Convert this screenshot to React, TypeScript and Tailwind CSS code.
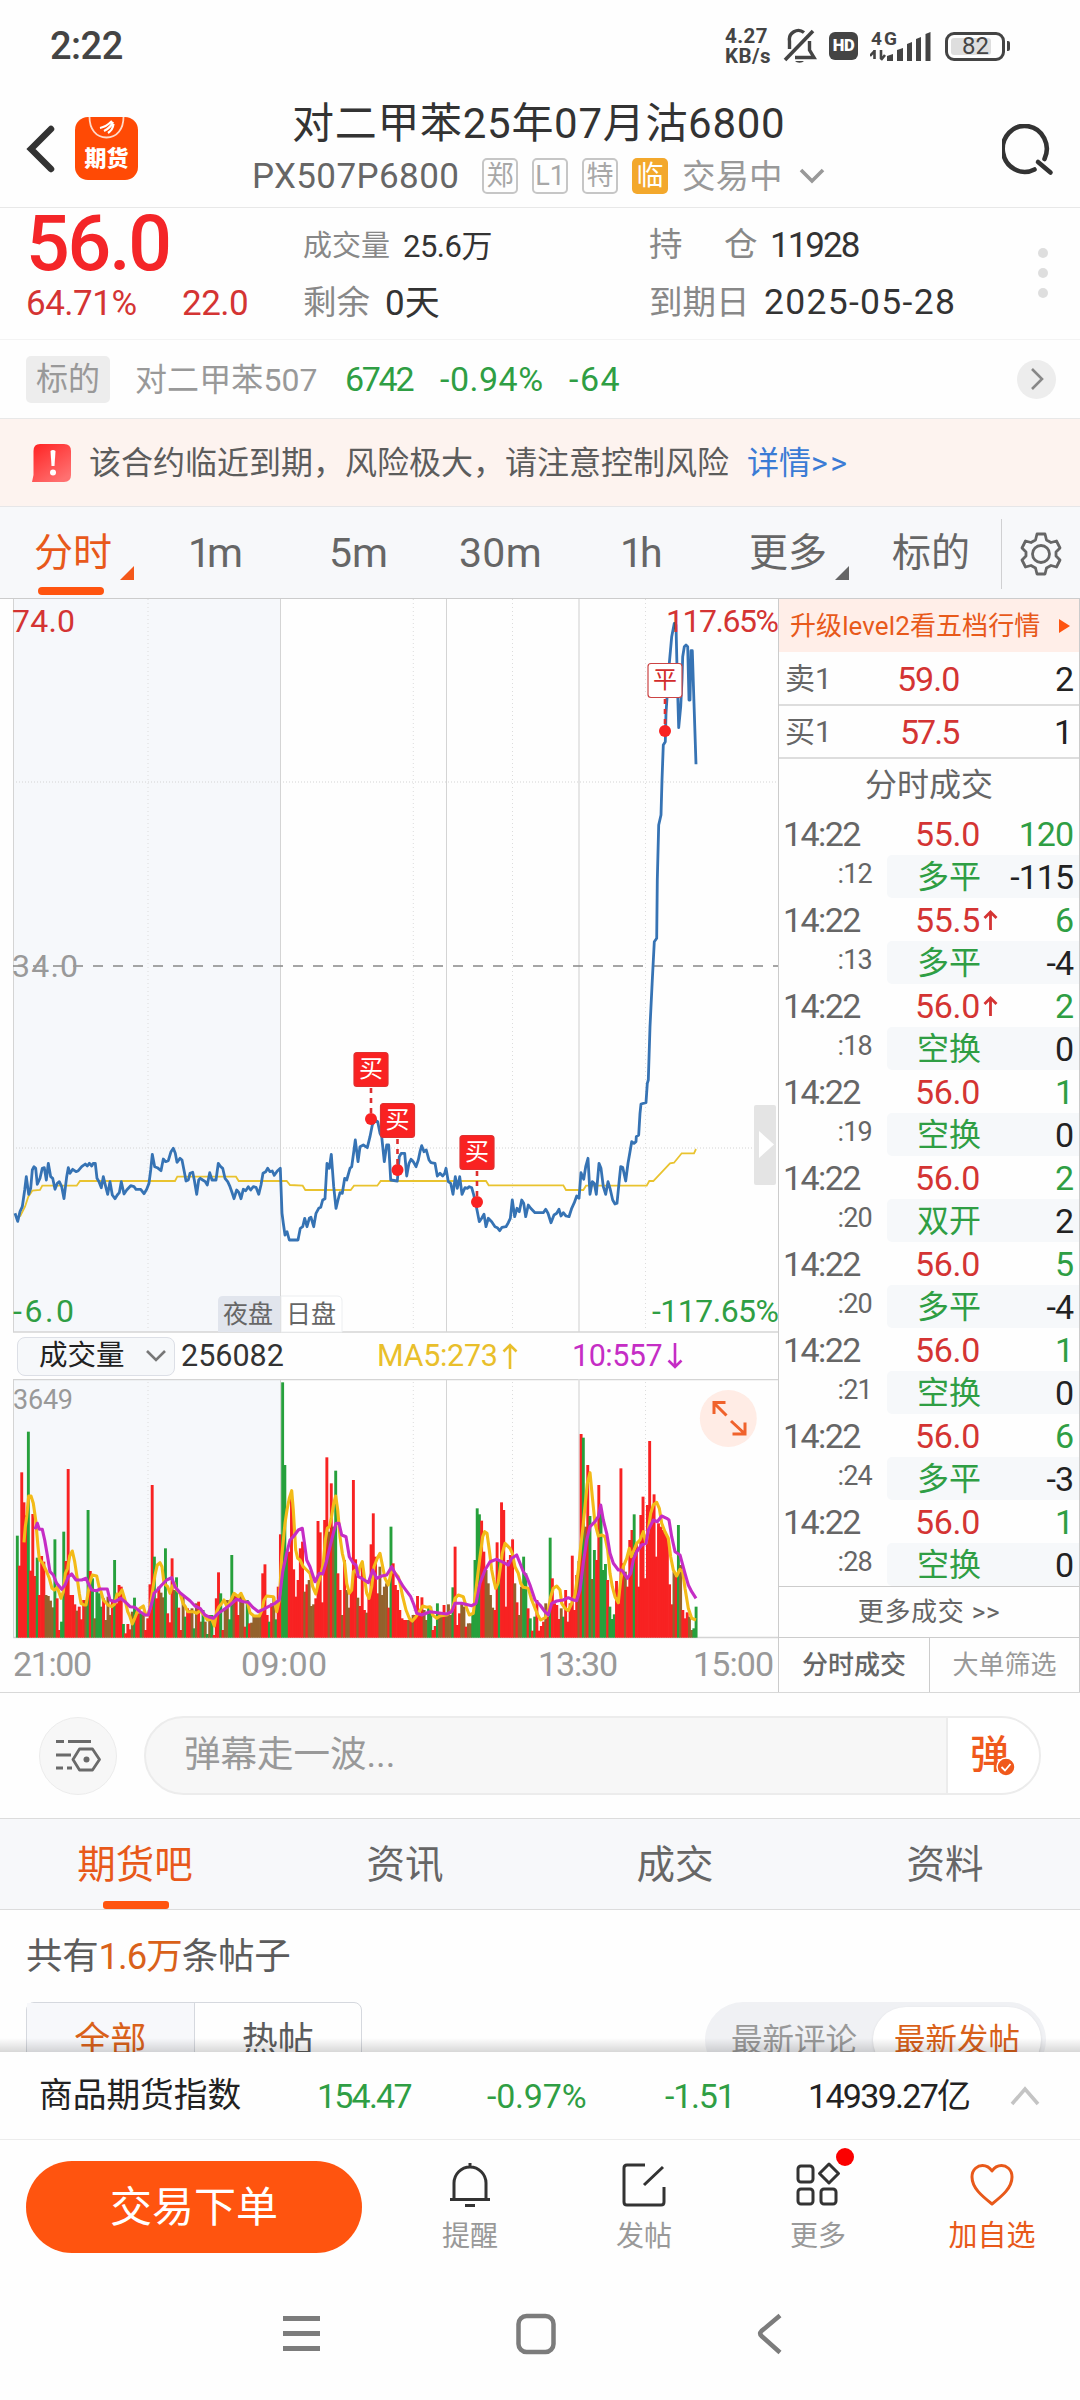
import React from 'react';

type Point = [number, number];

interface Trade {
  sec: string;
  price: string;
  up?: boolean;
  vol: string;
  kind: string;
  delta: string;
}

const TRADES: Trade[] = [
  { sec: ':12', price: '55.0', vol: '120', kind: '多平', delta: '-115' },
  { sec: ':13', price: '55.5', up: true, vol: '6', kind: '多平', delta: '-4' },
  { sec: ':18', price: '56.0', up: true, vol: '2', kind: '空换', delta: '0' },
  { sec: ':19', price: '56.0', vol: '1', kind: '空换', delta: '0' },
  { sec: ':20', price: '56.0', vol: '2', kind: '双开', delta: '2' },
  { sec: ':20', price: '56.0', vol: '5', kind: '多平', delta: '-4' },
  { sec: ':21', price: '56.0', vol: '1', kind: '空换', delta: '0' },
  { sec: ':24', price: '56.0', vol: '6', kind: '多平', delta: '-3' },
  { sec: ':28', price: '56.0', vol: '1', kind: '空换', delta: '0' },
];

const parse = (s: string): Point[] =>
  s.trim().split(/\s+/).map((p) => p.split(',').map(Number) as Point);

// sample units are thirds of a pixel
const toPoints = (s: string, dx: number, dy: number) =>
  parse(s).map(([x, y]) => `${((x + dx) / 3).toFixed(1)},${((y + dy) / 3).toFixed(1)}`).join(' ');

const PRICE_AM = `45,640 53,664 60,635 67,620 74,570 79,530 86,583 92,565 97,510 102,500 107,505 112,553 120,535 127,505 133,503 139,540 145,490 152,530 158,535 165,568 172,550 178,545 185,560 192,596 200,530 205,503 210,520 218,508 228,515 235,512 245,500 256,492 262,498 268,490 275,498 280,490 286,490 291,535 297,545 304,563 310,530 317,560 323,583 330,545 337,585 345,596 352,585 358,578 364,545 372,582 380,570 392,557 402,560 408,568 422,568 432,581 440,568 447,550 452,510 457,463 464,500 472,503 483,512 490,477 497,485 505,482 513,455 520,445 526,460 531,487 540,475 546,480 553,515 558,543 565,540 570,520 578,517 583,540 590,583 596,540 601,535 608,540 616,545 622,555 629,518 636,540 648,540 655,490 662,500 668,505 675,535 683,545 690,560 697,580 702,596 710,570 717,578 723,596 730,568 737,572 745,560 752,570 760,560 768,562 776,583 783,555 789,520 797,515 803,505 810,515 817,513 823,526 832,513 841,505 846,640 850,670 855,705 861,695 868,720 894,720 901,685 908,680 914,655 921,680 928,655 933,652 941,680 948,640 956,625 962,622 968,600 975,596 981,490 988,505 994,463 1001,560 1008,625 1014,600 1020,578 1027,580 1034,535 1040,540 1050,505 1055,500 1062,450 1066,420 1074,485 1080,440 1090,435 1102,443 1110,410 1117,375 1125,360 1133,365 1140,400`;
const PRICE_PM = `5,410 13,485 20,435 26,435 32,540 52,543 58,470 64,460 74,460 80,528 87,490 93,478 100,485 108,500 115,480 120,455 125,437 132,455 139,450 147,480 153,488 165,490 172,528 180,520 188,528 194,520 198,505 205,545 212,550 219,583 226,530 232,565 239,530 246,583 255,563 262,565 268,560 275,563 280,580 286,605 291,630 298,665 305,655 312,643 318,680 325,655 335,665 345,680 352,683 359,692 366,682 378,680 385,668 391,655 397,600 404,650 411,625 418,635 425,600 431,610 437,650 445,615 452,625 465,638 490,638 497,628 504,640 513,668 522,645 530,640 537,628 543,648 550,638 558,648 567,650 575,625 583,608 590,588 597,595 603,518 611,538 617,500 624,475 630,583 637,545 643,550 649,583 657,490 663,505 670,560 677,583 684,545 690,565 698,600 705,612 711,610 718,540 722,500 728,502 737,543 744,490 750,455 755,425 762,430 768,425 769,410 776,405 780,340 783,312 798,308 802,250`;
const PRICE_SPIKE = `265,1500 270,1340 277,1200 283,1085 290,1075 292,900 296,735 303,705 306,600 310,495 316,485 318,400 322,340 328,250 335,170 343,130 348,135 352,300 356,443 362,380 366,300 368,230 373,200 378,195 383,200 387,360 390,360 393,212 397,212 402,370 408,553`;
const AVG_AM = `60,650 75,620 85,590 97,572 120,570 127,557 230,557 240,543 525,543 532,530 708,530 716,543 860,543 870,555 908,557 916,570 1052,570 1062,557 1132,557 1142,543`;
const AVG_PM = `318,543 326,556 550,556 558,570 610,570 618,557 800,557 808,543 820,543 870,490 882,488 905,460 942,460 948,447`;

const PRICE = `${toPoints(PRICE_AM, 0, 1203)} ${toPoints(PRICE_PM, 1140, 1203)} ${toPoints(PRICE_SPIKE, 1680, -57)}`;
const AVG = `${toPoints(AVG_AM, 0, 1203)} ${toPoints(AVG_PM, 1140, 1203)}`;

// one entry per minute: colour letter + top of the bar
const BARS = `g497 r587 r307 r397 r435 g185 r602 r432 r618 g563 r675 r558 r575 m675 m678 m692 m712 g508 r685 r780 g755 g485 r573 r297 r675 r675 r703 m722 r710 r748 r690 m690 g420 r603 g625 m745 g660 g670 g710 r685 m750 m680 m735 r690 g570 r700 r645 r650 g762 r790 r762 r778 m725 g683 r725 r730 g725 m735 r780 r745 r643 r345 g560 r685 r650 m668 m682 g535 r730 r757 r565 m660 g622 r713 r780 m680 g740 r715 r720 m715 g775 m700 r695 m755 g720 m755 g792 m735 g735 r795 r685 r607 g670 r780 m715 m690 g748 g555 m670 r675 r735 m675 m690 r770 g690 r760 m758 m735 m735 m738 m720 r610 r583 r735 g755 r700 m680 g748 r650 r493 g37 g285 g550 r545 r385 r598 r680 r630 r535 r515 m665 r643 m630 m708 m703 r685 r453 r487 r697 r450 r262 m485 r340 m470 g302 r610 r660 m735 r570 m660 m713 r660 r330 r568 m683 r708 r580 r720 m728 r680 r523 r430 r560 r670 m590 m675 m650 m640 r713 g470
r580 r645 r660 r720 r745 r750 r750 m750 r750 m735 r735 r678 r735 r682 m720 m750 g710 g710 r780 r768 g700 m730 m735 r705 m735 m703 m735 g652 r530 r765 r730 m700 m710 r770 m760 m760 g735 g570 g415 g433 r452 r545 m600 m640 m675 m713 r720 r517 g570 r397 r420 r710 r570 r555 r508 m640 r697 m735 m650 g560 g610 r715 g745 r782 g740 r690 r782 r768 r755 m700 r740 g503 r625 r700 r705 r747 m715 g740 r660 r755 r700 r557 r720 r615 m573 r192 g203 m470 r285 g438 m627 g540 r570 r345 g420 g600 g582 r630 g710 g747 g733 r633 r700 r295 r580 m605 r650 r510 r480 g433 r520 r650 r435 r380 r625 r405 r213 r420 r373 r560 r460 r470 r480 r490 r500 r643 r703 m605 r620 g465 m585 r720 r745 r727 m740 m780 g775 g710`.split(/\s+/);
const BAR_FILL: Record<string, string> = { r: '#f82222', g: '#26a03c', m: '#93622c' };

const MA5_AM = `72,517 76,470 80,440 86,378 93,378 100,400 107,450 114,530 118,568 128,580 140,605 148,625 156,655 163,660 172,652 183,685 190,665 196,610 203,595 209,558 217,543 224,575 231,620 238,670 243,700 252,705 258,705 264,670 270,635 277,615 290,618 297,650 303,665 310,690 324,705 335,710 344,702 351,672 357,675 366,660 375,690 383,725 390,740 397,762 404,745 412,725 420,715 430,708 437,735 443,735 450,715 458,660 465,615 472,585 480,578 486,590 492,640 503,650 510,670 517,648 523,640 530,660 540,670 549,700 556,710 563,725 580,725 590,730 600,722 612,735 622,750 635,748 643,768 650,725 657,710 664,702 672,690 680,708 688,700 695,685 702,670 715,680 723,670 732,690 743,700 750,728 762,738 778,738 786,720 792,690 800,678 820,680 830,725 838,690 845,560 855,460 861,420 868,385 875,362 880,420 887,540 893,565 900,570 910,590 920,600 930,610 938,650 947,672 955,640 962,615 970,580 976,510 982,475 988,470 994,445 1001,400 1007,378 1013,420 1020,500 1027,550 1034,580 1040,640 1048,670 1055,660 1060,605 1067,600 1073,615 1080,590 1087,575 1093,620 1100,670 1107,685 1115,650 1122,590 1132,565 1140,550`;
const MA5_PM = `8,590 15,625 25,645 34,605 42,605 55,620 60,640 68,680 78,720 88,745 97,753 108,740 118,725 128,708 140,712 150,710 158,735 170,745 180,738 200,735 210,728 218,715 225,685 235,675 250,680 260,715 268,735 280,730 290,640 300,560 308,500 314,485 321,490 328,540 335,600 341,630 347,655 354,640 360,600 367,550 375,520 390,535 397,550 405,590 415,610 422,640 430,652 445,655 455,690 465,715 475,738 482,750 497,742 505,720 512,680 520,655 530,648 540,660 545,700 555,715 565,722 575,700 585,675 595,600 602,530 609,470 616,400 622,340 630,308 637,380 645,460 655,498 665,495 675,500 683,540 690,610 697,650 705,680 715,698 722,630 730,590 740,565 748,535 754,560 762,540 770,520 780,510 790,485 798,520 805,480 812,430 820,405 830,397 838,415 845,460 855,485 865,505 872,560 880,600 890,618 900,598 908,605 915,655 925,715 935,745 948,750`;
const MA10_AM = `105,478 112,460 118,478 127,478 134,510 142,555 150,605 160,615 170,640 185,658 195,645 205,620 215,612 228,630 245,630 258,625 265,640 275,660 290,662 300,657 322,657 330,690 345,695 362,685 375,695 390,710 405,712 420,725 435,735 445,735 455,700 462,670 472,660 485,645 500,630 515,623 525,650 540,668 555,680 570,692 585,708 600,715 615,735 630,742 640,745 655,730 670,720 690,705 710,688 730,695 745,697 758,712 775,725 790,718 805,710 825,700 838,690 848,605 860,550 870,510 880,500 895,480 907,475 912,510 920,570 930,590 945,635 958,610 968,612 978,580 990,530 1000,490 1008,460 1017,460 1025,495 1038,500 1048,560 1060,580 1068,585 1075,620 1085,625 1105,638 1118,600 1130,625 1145,618`;
const MA10_PM = `20,615 35,590 45,610 58,630 70,650 92,680 102,705 110,730 125,735 150,725 200,732 215,725 225,700 245,700 275,707 288,700 300,640 315,600 330,575 350,568 365,575 385,585 395,565 410,555 420,580 430,605 440,620 450,645 465,690 480,705 495,725 505,735 515,700 530,693 550,690 565,683 580,690 590,692 600,660 610,580 620,510 630,470 645,455 655,440 662,405 670,450 680,490 690,550 700,580 715,600 725,600 742,625 752,610 760,570 770,545 785,525 798,520 805,480 820,450 832,455 845,438 860,445 867,450 875,500 885,545 900,555 907,580 915,610 925,645 935,665 948,685`;
const MA5 = `${toPoints(MA5_AM, 0, -27)} ${toPoints(MA5_PM, 1140, -27)}`;
const MA10 = `${toPoints(MA10_AM, 0, -27)} ${toPoints(MA10_PM, 1140, -27)}`;

const StatusBar = () => (
  <div className="flex h-[92px] shrink-0 items-center text-[#444]">
    <span className="ml-[50px] w-[675px] text-[38px] font-medium leading-none tracking-[-0.5px]">2:22</span>
    <div className="w-[58px] text-[20.500px] font-bold leading-[20px] tracking-[0.4px]">
      <div>4.27</div>
      <div>KB/s</div>
    </div>
    <svg className="h-[36px] w-[34px]" viewBox="0 0 34 36" fill="none" stroke="#444" strokeWidth="3.4">
      <path d="M2 32 L30 3" strokeWidth="3.6" />
      <path d="M6.5 21 V13 A9 9 0 0 1 21 4.5" />
      <path d="M26.500 13 V22 L31 29.500 H12" />
      <path d="M12 33 a5 3 0 0 0 9 0 z" fill="#444" stroke="none" />
    </svg>
    <div className="ml-[12px] flex h-[28px] w-[29px] items-center justify-center rounded-[6px] bg-[#444] text-[16.500px] font-black leading-none tracking-[-0.3px] text-white">HD</div>
    <svg className="ml-[12px] h-[34px] w-[62px]" viewBox="0 0 62 34">
      <text x="1" y="16" fontSize="19" fontWeight="700" fill="#444" textLength="26" fontFamily="Roboto">4G</text>
      <path d="M4.500 21 V30 M0 27 L4.500 22 M11 21 V30 M11 31 L15 26" stroke="#444" strokeWidth="2.6" fill="none" />
      <path d="M17 27 l6-2 v7 h-6z M27 21 l6-2 v13 h-6z M37 15 l5-2 v19 h-5z M46 10 l5-2 v24 h-5z M55.500 5 l5-2 v29 h-5z" fill="#444" />
    </svg>
    <div className="ml-[13px] flex h-[29px] w-[60px] items-center rounded-[9px] border-[3px] border-[#444] p-[3px]">
      <div className="flex h-full w-[40px] items-center rounded-[3px] bg-[#dedede] pl-[11px] text-[24px] leading-none">82</div>
    </div>
    <div className="ml-[2px] h-[10px] w-[3px] rounded-r-[2px] bg-[#444]" />
  </div>
);

const Tag = ({ text }: { text: string }) => (
  <span className="mr-[14px] flex size-[36px] items-center justify-center rounded-[5px] border-2 border-[#c6c6c6] text-[27px] leading-none text-[#a8a8a8]">
    {text}
  </span>
);

const Header = () => (
  <div className="flex h-[116px] shrink-0 border-b border-[#e8e8e8]">
    <svg className="ml-[26px] mt-[33px] h-[48px] w-[30px]" viewBox="0 0 30 48" fill="none" stroke="#333" strokeWidth="6.500">
      <path d="M25 4 L5 24 L25 44" strokeLinecap="round" />
    </svg>
    <div className="relative ml-[19px] mt-[25px] flex size-[63px] justify-center overflow-hidden rounded-[13px] bg-[#ff4a05]">
      <svg className="absolute left-[13px] top-0 h-[22px] w-[37px]" viewBox="0 0 37 22" fill="none" stroke="#fff">
        <path d="M1.500 0 C1.500 12 8 20.500 18.500 20.500 S35.500 12 35.500 0" strokeWidth="1.800" stroke="#ffd9c8" />
        <path d="M12 11 C17 10 20 8 24 4 M16 14 C20 12 23 10 25 5 M20 16 C23 14 25 12 25.500 7" strokeWidth="2.200" />
      </svg>
      <span className="mt-[31px] text-[22px] font-black leading-none text-white">期货</span>
    </div>
    <div className="ml-[114px] flex w-[660px] flex-col">
      <div className="ml-[40px] mt-[11px] text-[42px] leading-none tracking-[0.7px] text-[#333]">对二甲苯25年07月沽6800</div>
      <div className="mt-[13px] flex h-[36px] items-center">
        <span className="w-[230px] pt-[1px] text-[35px] leading-none tracking-[0.4px] text-[#666]">PX507P6800</span>
        <Tag text="郑" />
        <Tag text="L1" />
        <Tag text="特" />
        <span className="flex size-[36px] items-center justify-center rounded-[5px] bg-[#f3a82c] text-[27px] leading-none text-white">临</span>
        <span className="ml-[14px] w-[102px] pt-[1px] text-[33.500px] leading-none text-[#999]">交易中</span>
        <svg className="ml-[14px] h-[18px] w-[28px]" viewBox="0 0 28 18" fill="none" stroke="#999" strokeWidth="3.600">
          <path d="M3 3 L14 14 L25 3" />
        </svg>
      </div>
    </div>
    <svg className="ml-[90px] mt-[32px] h-[54px] w-[54px]" viewBox="0 0 54 54" fill="none" stroke="#333" strokeWidth="4.600" strokeLinecap="round">
      <path d="M32.500 45.500 A22 23 0 1 1 42.500 35" />
      <path d="M36 38 L48.500 48.500" />
    </svg>
  </div>
);

const Quote = () => (
  <div className="flex h-[132px] shrink-0 border-b border-[#f3f3f3]">
    <div className="w-[303px] pl-[26px]">
      <div className="mt-[-2px] text-[77px] font-medium leading-[76px] tracking-[-2.200px] text-[#f42528]">56.0</div>
      <div className="mt-[4px] flex text-[35px] leading-[36px] tracking-[-0.5px] text-[#d43433]">
        <span className="w-[156px]">64.71%</span>
        <span>22.0</span>
      </div>
    </div>
    <div className="flex w-[346px] flex-col text-[#333]">
      <div className="mt-[20px] flex h-[36px] items-center leading-none">
        <span className="w-[100px] text-[29px] text-[#888]">成交量</span>
        <span className="text-[31px] tracking-[-0.5px]">25.6万</span>
      </div>
      <div className="mt-[21px] flex h-[36px] items-center leading-none">
        <span className="w-[82px] text-[33.500px] text-[#888]">剩余</span>
        <span className="text-[35px]">0天</span>
      </div>
    </div>
    <div className="flex w-[389px] flex-col text-[#333]">
      <div className="mt-[19px] flex h-[36px] items-center leading-none">
        <span className="w-[75px] text-[33.500px] text-[#888]">持</span>
        <span className="w-[46px] text-[33.500px] text-[#888]">仓</span>
        <span className="text-[35px] tracking-[-2px]">11928</span>
      </div>
      <div className="mt-[22px] flex h-[36px] items-center leading-none">
        <span className="w-[115px] text-[33.500px] text-[#888]">到期日</span>
        <span className="text-[35.500px] tracking-[1.300px]">2025-05-28</span>
      </div>
    </div>
    <div className="flex flex-col gap-[10px] pt-[40px]">
      <i className="size-[10px] rounded-full bg-[#dedede]" />
      <i className="size-[10px] rounded-full bg-[#dedede]" />
      <i className="size-[10px] rounded-full bg-[#dedede]" />
    </div>
  </div>
);

const Underlying = () => (
  <div className="flex h-[79px] shrink-0 items-center border-b border-[#e8e8e8] leading-none text-[#2f9e44]">
    <span className="ml-[26px] flex h-[47px] w-[84px] items-center justify-center rounded-[5px] bg-[#ededed] text-[32px] text-[#999]">标的</span>
    <span className="ml-[25px] w-[210px] pt-[1px] text-[32px] tracking-[0.1px] text-[#999]">对二甲苯507</span>
    <span className="w-[95px] text-[34px] tracking-[-2.300px]">6742</span>
    <span className="w-[129px] text-[34px] tracking-[0.500px]">-0.94%</span>
    <span className="w-[448px] text-[34px] tracking-[1.500px]">-64</span>
    <span className="flex size-[39px] items-center justify-center rounded-full bg-[#ededed]">
      <svg className="h-[24px] w-[14px]" viewBox="0 0 14 24" fill="none" stroke="#888" strokeWidth="2.600">
        <path d="M2 2 L12 12 L2 22" />
      </svg>
    </span>
  </div>
);

const Warning = () => (
  <div className="flex h-[88px] shrink-0 items-center border-b border-[#e6e6e8] bg-[#fdf3ef] text-[32px] leading-none text-[#5c5c5c]">
    <svg className="ml-[32px] h-[38px] w-[39px]" viewBox="0 0 39 38">
      <defs>
        <linearGradient id="warn" x1="0" y1="0" x2="0.7" y2="1">
          <stop offset="0" stopColor="#ff2222" />
          <stop offset="1" stopColor="#ff7070" />
        </linearGradient>
      </defs>
      <path d="M8 0 H32 Q39 0 39 7 V31 Q39 38 32 38 H0 L1.500 31 V7 Q1.500 0 8 0 Z" fill="url(#warn)" />
      <path d="M18.500 7 q2.500-2 5 0 l-1 15 h-3z" fill="#fff" />
      <circle cx="21" cy="28.500" r="3" fill="#fff" />
    </svg>
    <span className="ml-[18px] w-[658px]">该合约临近到期，风险极大，请注意控制风险</span>
    <span className="text-[#3a7bd5]">详情<span className="tracking-[2.500px]">&gt;&gt;</span></span>
  </div>
);

const PeriodTabs = () => (
  <div className="flex h-[92px] shrink-0 items-center border-b border-[#ccc] bg-[#f7f8fa] pt-[2px] text-[39px] leading-none text-[#666]">
    <div className="relative ml-[34px] flex h-full w-[154px] items-center text-[#e8591a]">
      <span>分时</span>
      <svg className="ml-[8px] mt-[38px] size-[14px]" viewBox="0 0 14 14"><path d="M14 0 V14 H0 Z" fill="#f4581a" /></svg>
      <i className="absolute bottom-[3px] left-[4px] h-[8px] w-[66px] rounded-full bg-[#ff540f]" />
    </div>
    <span className="w-[141px] text-[41px] tracking-[-4px]">1m</span>
    <span className="w-[130px] text-[41px]">5m</span>
    <span className="w-[161px] text-[41px] tracking-[0.3px]">30m</span>
    <span className="w-[129px] text-[41px] tracking-[-3px]">1h</span>
    <span className="w-[78px] whitespace-nowrap">更多</span>
    <svg className="ml-[8px] mt-[38px] size-[14px]" viewBox="0 0 14 14"><path d="M14 0 V14 H0 Z" fill="#666" /></svg>
    <span className="ml-[43px] w-[109px]">标的</span>
    <i className="h-[70px] w-px bg-[#d0d0d2]" />
    <svg className="ml-[18px] h-[44px] w-[42px]" viewBox="0 0 42 44" fill="none" stroke="#666" strokeWidth="2.800" strokeLinejoin="round">
      <path d="M17 2 H25 L26.500 8 L31 10.500 L36.500 9 L40 16 L36 20 V24 L40 28 L36.500 35 L31 33.500 L26.500 36 L25 42 H17 L15.500 36 L11 33.500 L5.500 35 L2 28 L6 24 V20 L2 16 L5.500 9 L11 10.500 L15.500 8 Z" />
      <circle cx="21" cy="22" r="8.500" />
    </svg>
  </div>
);

const Marker = ({ x, y, dotY, text, hollow }: { x: number; y: number; dotY: number; text: string; hollow?: boolean }) => (
  <g>
    <line x1={x} x2={x} y1={y + 36} y2={dotY} stroke="#dc2f2f" strokeWidth="2.600" strokeDasharray="5 5" />
    <circle cx={x} cy={dotY} r="6" fill="#f92222" />
    <rect x={x - 17} y={y + 0.5} width="34" height="34" rx="3" fill={hollow ? '#fff' : '#f92222'} stroke={hollow ? '#c44' : '#e03030'} strokeWidth="1.200" />
    <text x={x} y={y + 25} fontSize="24" textAnchor="middle" fill={hollow ? '#d22c2c' : '#fff'}>{text}</text>
  </g>
);

const DottedV = ({ top, bottom }: { top: number; bottom: number }) => (
  <>
    {[148, 413.3, 512.5, 645.5].map((x) => (
      <line key={x} x1={x} x2={x} y1={top} y2={bottom} stroke="#dcdcdc" strokeWidth="1" strokeDasharray="1 3" />
    ))}
  </>
);

const PriceChart = () => (
  <svg className="block h-[734px] w-[778px]" viewBox="0 0 778 734">
    <rect x="13" y="0" width="267" height="733" fill="#f6f8fb" />
    <DottedV top={0} bottom={732} />
    <g stroke="#d4d4d4">
      <line x1="13.500" x2="13.500" y1="0" y2="733" />
      <line x1="280.500" x2="280.500" y1="0" y2="733" />
      <line x1="446.500" x2="446.500" y1="0" y2="733" />
      <line x1="579" x2="579" y1="0" y2="733" stroke="#e0e0e0" strokeWidth="1.600" />
      <line x1="13" x2="778" y1="183" y2="183" strokeDasharray="1 2" />
      <line x1="13" x2="778" y1="549" y2="549" strokeDasharray="1 2" />
      <line x1="13" x2="778" y1="733" y2="733" strokeWidth="1.600" />
    </g>
    <line x1="13" x2="778" y1="367" y2="367" stroke="#888" strokeWidth="1.600" strokeDasharray="10 10" />
    <path d="M218 733 V702 q0-5 5-5 H280 V733z" fill="#e1e5ed" />
    <path d="M281 733 V697 H337 q5 0 5 5 V733z" fill="#fff" stroke="#eceef0" />
    <g fontSize="25" fill="#666">
      <text x="223" y="724">夜盘</text>
      <text x="286" y="724">日盘</text>
    </g>
    <polyline points={AVG} fill="none" stroke="#e9c32f" strokeWidth="1.800" />
    <polyline points={PRICE} fill="none" stroke="#3673b4" strokeWidth="2.800" strokeLinejoin="round" />
    <g fontSize="32">
      <text x="12" y="33" fill="#d43433" textLength="63">74.0</text>
      <text x="666" y="33" fill="#d43433" textLength="113">117.65%</text>
      <text x="12" y="378" fill="#999" textLength="66">34.0</text>
      <text x="13" y="723" fill="#2f9e44" textLength="61">-6.0</text>
      <text x="652" y="723" fill="#2f9e44" textLength="127">-117.65%</text>
    </g>
    <rect x="754" y="506" width="22" height="80" rx="2" fill="#e4e4e4" />
    <path d="M759 532 L774 545.500 L759 559 Z" fill="#fff" />
    <Marker x={371} y={453} dotY={520} text="买" />
    <Marker x={397.5} y={504} dotY={571} text="买" />
    <Marker x={477} y={536} dotY={603} text="买" />
    <Marker x={665} y={64} dotY={132} text="平" hollow />
  </svg>
);

const VolumeChart = () => (
  <svg className="block h-[313px] w-[778px]" viewBox="0 0 778 313">
    <rect x="13" y="0" width="267" height="258" fill="#f6f8fb" />
    <DottedV top={3} bottom={258} />
    <g stroke="#d4d4d4">
      <line x1="13" x2="778" y1="0.500" y2="0.500" strokeWidth="1.600" />
      <line x1="13" x2="778" y1="258.500" y2="258.500" strokeWidth="1.600" />
      <line x1="13.500" x2="13.500" y1="0" y2="258" />
      <line x1="280.500" x2="280.500" y1="0" y2="258" />
      <line x1="446.500" x2="446.500" y1="0" y2="258" />
      <line x1="579" x2="579" y1="0" y2="258" stroke="#e0e0e0" strokeWidth="1.600" />
    </g>
    {BARS.map((b, i) => {
      const top = Number(b.slice(1));
      return <rect key={i} x={(47.6 + i * 6.633) / 3} y={(top - 27) / 3} width="2.9" height={(803 - top) / 3} fill={BAR_FILL[b[0]]} />;
    })}
    <polyline points={MA5} fill="none" stroke="#f3bb18" strokeWidth="3.100" strokeLinejoin="round" />
    <polyline points={MA10} fill="none" stroke="#c52dc5" strokeWidth="3.100" strokeLinejoin="round" />
    <text x="13" y="30" fontSize="27" fill="#999" textLength="60">3649</text>
    <g fontSize="34" fill="#999">
      <text x="13" y="297" textLength="79">21:00</text>
      <text x="241" y="297" textLength="86">09:00</text>
      <text x="538" y="297" textLength="80">13:30</text>
      <text x="693" y="297" textLength="81">15:00</text>
    </g>
    <circle cx="728.300" cy="39.500" r="28.500" fill="#ffece5" />
    <path d="M726.500 36.500 L714 24 M714 35 V23.500 H725.500 M731 42 L744.500 54.500 M745 43.500 V55 H732.500" fill="none" stroke="#f0622c" strokeWidth="3" />
  </svg>
);

const IndicatorBar = () => (
  <div className="flex h-[46px] items-center text-[30.500px] leading-none">
    <div className="ml-[17px] flex h-[39px] w-[158px] items-center rounded-[8px] border border-[#dcdfe6] bg-[#f6f8fa] text-[28.500px] text-[#222]">
      <span className="ml-[21px] w-[86px]">成交量</span>
      <svg className="ml-[20px] h-[14px] w-[22px]" viewBox="0 0 22 14" fill="none" stroke="#777" strokeWidth="2.600">
        <path d="M2 2 L11 11 L20 2" />
      </svg>
    </div>
    <span className="ml-[6px] w-[196px] text-[#333]">256082</span>
    <span className="w-[125px] tracking-[-0.300px] text-[#e9bf2b]">MA5:273</span>
    <svg className="h-[28px] w-[16px]" viewBox="0 0 16 28" fill="none" stroke="#e9bf2b" strokeWidth="2.600"><path d="M8 27 V3 M1.500 9.500 L8 3 L14.500 9.500" /></svg>
    <span className="ml-[54px] w-[95px] tracking-[-0.500px] text-[#c52dc5]">10:557</span>
    <svg className="h-[28px] w-[16px]" viewBox="0 0 16 28" fill="none" stroke="#c52dc5" strokeWidth="2.600"><path d="M8 1 V25 M1.500 18.500 L8 25 L14.500 18.500" /></svg>
  </div>
);

const TradeRow = ({ sec, price, up, vol, kind, delta }: Trade) => (
  <div className="h-[86px] text-[34px] leading-none">
    <div className="flex h-[43px] items-center">
      <span className="w-[132px] pl-[4px] tracking-[-1.600px] text-[#666]">14:22</span>
      <span className="w-[72px] whitespace-nowrap pl-[4px] tracking-[-0.300px] text-[#d43433]">{price}</span>
      <span className="w-[14px]">
        {up && (
          <svg className="h-[20px] w-[15px]" viewBox="0 0 15 20" fill="none" stroke="#d43433" strokeWidth="2.800"><path d="M7.500 20 V3 M1.500 8 L7.500 2 L13.500 8" /></svg>
        )}
      </span>
      <span className="flex-1 pr-[6px] text-right tracking-[-1px] text-[#2f9e44]">{vol}</span>
    </div>
    <div className="flex h-[43px]">
      <span className="mt-[6px] w-[93px] text-right text-[27px] tracking-[-0.800px] text-[#666]">{sec}</span>
      <div className="ml-[15px] flex flex-1 items-center rounded-l-[5px] bg-[#f6f8fa]">
        <span className="ml-[30px] text-[32px] text-[#2f9e44]">{kind}</span>
        <span className="flex-1 pr-[6px] text-right tracking-[-1px] text-[#222]">{delta}</span>
      </div>
    </div>
  </div>
);

const DealPanel = () => (
  <div className="flex w-[302px] flex-col border-x border-[#ccc]">
    <div className="flex h-[53px] items-center bg-[#ffeee8] text-[26px] leading-none text-[#e8591a]">
      <span className="ml-[11px] w-[269px] whitespace-nowrap tracking-[0.1px]">升级level2看五档行情</span>
      <svg className="h-[14px] w-[12px]" viewBox="0 0 12 14"><path d="M0 0 L11 7 L0 14Z" fill="#ff540f" /></svg>
    </div>
    <div className="flex h-[54px] items-center border-b-2 border-[#ddd] pt-[2px] text-[34px] leading-none">
      <span className="w-[118px] pl-[6px] text-[30px] text-[#666]">卖1</span>
      <span className="tracking-[-1px] text-[#d43433]">59.0</span>
      <span className="flex-1 pr-[5px] text-right text-[#222]">2</span>
    </div>
    <div className="flex h-[53px] items-center border-b-2 border-[#ddd] pt-[1px] text-[34px] leading-none">
      <span className="w-[121px] pl-[6px] text-[30px] text-[#666]">买1</span>
      <span className="tracking-[-2px] text-[#d43433]">57.5</span>
      <span className="flex-1 pr-[6px] text-right text-[#222]">1</span>
    </div>
    <div className="flex h-[53px] items-center justify-center pb-[1px] text-[32px] leading-none text-[#666]">分时成交</div>
    {TRADES.map((t, i) => (
      <TradeRow key={i} {...t} />
    ))}
    <div className="flex h-[52px] items-center justify-center border-y border-[#ccc] text-[26px] leading-none tracking-[0.7px] text-[#666]">更多成交 &gt;&gt;</div>
    <div className="flex flex-1 text-[26px] leading-none">
      <span className="flex w-[151px] items-center justify-center border-r border-[#ccc] font-medium text-[#666]">分时成交</span>
      <span className="flex flex-1 items-center justify-center text-[#999]">大单筛选</span>
    </div>
  </div>
);

const Danmu = () => (
  <div className="flex h-[125px] shrink-0 items-center">
    <div className="ml-[39px] flex size-[78px] items-center justify-center rounded-full border border-[#ececec] bg-[#f7f7f7]">
      <svg className="h-[36px] w-[46px]" viewBox="0 0 46 36" fill="none" stroke="#6a6a6a" strokeWidth="2.800">
        <path d="M1 3.500 H9 M13 3.500 H36 M1 17 H16 M1 30 H8 M12 30 H17" />
        <path d="M24.500 11 H37.500 L44.500 21.500 L37.500 32 H24.500 L18 21.500 Z" strokeLinejoin="round" />
        <circle cx="31.500" cy="21.500" r="3" fill="#6a6a6a" stroke="none" />
      </svg>
    </div>
    <div className="ml-[27px] flex h-[79px] w-[897px] items-center overflow-hidden rounded-full border-2 border-[#ececec] bg-[#f7f7f7]">
      <span className="w-[800px] pl-[38px] text-[36.500px] leading-none text-[#999]">弹幕走一波...</span>
      <div className="relative flex h-full flex-1 items-center border-l-2 border-[#ececec] bg-white pl-[22px] text-[39px] font-medium leading-none text-[#f0591c]">
        弹
        <svg className="absolute left-[48px] top-[39px] size-[20px]" viewBox="0 0 20 20">
          <circle cx="10" cy="10" r="9" fill="#f0591c" stroke="#fff" strokeWidth="1.500" />
          <path d="M5.500 10 L9 13.500 L14.500 7" fill="none" stroke="#fff" strokeWidth="1.800" />
        </svg>
      </div>
    </div>
  </div>
);

const SectionTabs = () => (
  <div className="grid h-[92px] shrink-0 grid-cols-4 border-y border-[#dcdcdc] bg-[#f7f8fa] text-[38.500px] leading-none text-[#666]">
    <div className="relative flex items-center justify-center pt-[3px] text-[#e8591a]">
      期货吧
      <i className="absolute bottom-0 left-[103px] h-[8px] w-[66px] rounded-[3px] bg-[#ff540f]" />
    </div>
    <div className="flex items-center justify-center pt-[3px]">资讯</div>
    <div className="flex items-center justify-center pt-[3px]">成交</div>
    <div className="flex items-center justify-center pt-[3px]">资料</div>
  </div>
);

const Posts = () => (
  <div className="relative h-[142px] shrink-0 overflow-hidden leading-none text-[#5c5c5c]">
    <div className="mt-[29px] pl-[26px] text-[36.500px] tracking-[-0.2px]">
      共有<span className="tracking-[-1px] text-[#d9611a]">1.6万</span>条帖子
    </div>
    <div className="mt-[26px] flex justify-between pl-[26px] pr-[34px]">
      <div className="flex h-[76px] w-[336px] rounded-[8px] border border-[#d5d8de] text-[36px]">
        <span className="flex flex-1 items-center justify-center border-r border-[#d5d8de] bg-[#f7f8fb] pt-[3px] text-[#d9611a]">全部</span>
        <span className="flex flex-1 items-center justify-center pt-[3px]">热帖</span>
      </div>
      <div className="flex h-[76px] w-[341px] rounded-full bg-[#f0f1f4] p-[5px] text-[31.500px]">
        <span className="flex w-[163px] items-center pl-[21px] pt-[3px] text-[#999]">最新评论</span>
        <span className="flex flex-1 items-center justify-center rounded-full bg-white pt-[3px] text-[#d9611a] shadow-sm">最新发帖</span>
      </div>
    </div>
    <div className="absolute inset-x-0 bottom-0 h-[14px] bg-gradient-to-b from-transparent to-black/15" />
  </div>
);

const IndexBar = () => (
  <div className="flex h-[88px] shrink-0 items-center border-b border-[#ececec] text-[34px] leading-none text-[#2f9e44]">
    <span className="w-[317px] pl-[39px] text-[33.700px] text-[#222]">商品期货指数</span>
    <span className="w-[170px] tracking-[-1.800px]">154.47</span>
    <span className="w-[178px] tracking-[-0.200px]">-0.97%</span>
    <span className="w-[143px] tracking-[-1.200px]">-1.51</span>
    <span className="w-[202px] tracking-[-1.700px] text-[#222]">14939.27亿</span>
    <svg className="h-[20px] w-[30px]" viewBox="0 0 30 20" fill="none" stroke="#c4c4c4" strokeWidth="3.600"><path d="M2 18 L15 3 L28 18" /></svg>
  </div>
);

const Action = ({ label, active, children }: { label: string; active?: boolean; children: React.ReactNode }) => (
  <div className={active ? 'flex w-[174px] flex-col items-center text-[#e8591a]' : 'flex w-[174px] flex-col items-center text-[#999]'}>
    <svg className="mt-[21px] h-[48px] w-[48px]" viewBox="0 0 48 48" fill="none" stroke={active ? '#e8591a' : '#333'} strokeWidth="3" strokeLinejoin="round">
      {children}
    </svg>
    <span className={active ? 'mt-[13px] text-[29px] leading-none' : 'mt-[14px] text-[28px] leading-none'}>{label}</span>
  </div>
);

const ActionBar = () => (
  <div className="relative flex h-[124px] shrink-0">
    <div className="ml-[26px] mt-[21px] flex h-[92px] w-[336px] items-center justify-center rounded-full bg-[#ff540f] pt-[2px] text-[42px] leading-none text-white">交易下单</div>
    <div className="ml-[21px] flex">
      <Action label="提醒">
        <path d="M24 2 V6 M8 38 V22 A16 16 0 0 1 40 22 V38 M4 38.500 H44 M19 44.500 H29" />
      </Action>
      <Action label="发帖">
        <path d="M25 4 H7 Q4 4 4 7 V41 Q4 44 7 44 H41 Q44 44 44 41 V26 M43 6 L24 24" />
      </Action>
      <Action label="更多">
        <rect x="4" y="5" width="15" height="16" rx="3" />
        <rect x="4" y="28" width="15" height="15" rx="3" />
        <rect x="27" y="28" width="15" height="15" rx="3" />
        <path d="M35 3 L44.500 12.500 L35 22 L25.500 12.500 Z" />
      </Action>
      <Action label="加自选" active>
        <path d="M24 43 C14 35 4 27 4 16 C4 8 10 4.500 14.500 4.500 C19 4.500 22 7 24 10 C26 7 29 4.500 33.500 4.500 C38 4.500 44 8 44 16 C44 27 34 35 24 43 Z" />
      </Action>
    </div>
    <i className="absolute left-[836px] top-[8px] size-[18px] rounded-full bg-[#fb0000]" />
  </div>
);

const NavBar = () => (
  <div className="flex flex-1 pt-[49px]">
    <svg className="ml-[283px] h-[42px] w-[37px]" viewBox="0 0 37 42" stroke="#7c7c7c" strokeWidth="5"><path d="M0 5.500 H37 M0 20.500 H37 M0 35.500 H37" /></svg>
    <svg className="ml-[196px] h-[42px] w-[40px]" viewBox="0 0 40 42" fill="none" stroke="#7c7c7c" strokeWidth="4.500"><rect x="2.500" y="3" width="35" height="36" rx="8" /></svg>
    <svg className="ml-[201px] h-[42px] w-[26px]" viewBox="0 0 26 42" fill="none" stroke="#7c7c7c" strokeWidth="4.500"><path d="M23 2.500 L4.500 18 Q2 20.500 4.500 23 L23 39.500" /></svg>
  </div>
);

const App = () => (
  <div className="flex h-[2400px] w-[1080px] flex-col overflow-hidden bg-[#fefefe] font-['Roboto','Noto_Sans_CJK_SC',sans-serif]">
    <StatusBar />
    <Header />
    <Quote />
    <Underlying />
    <Warning />
    <PeriodTabs />
    <div className="flex h-[1094px] shrink-0 border-b border-[#d8d8d8]">
      <div className="w-[778px]">
        <PriceChart />
        <IndicatorBar />
        <VolumeChart />
      </div>
      <DealPanel />
    </div>
    <Danmu />
    <SectionTabs />
    <Posts />
    <IndexBar />
    <ActionBar />
    <NavBar />
  </div>
);

export default App;
